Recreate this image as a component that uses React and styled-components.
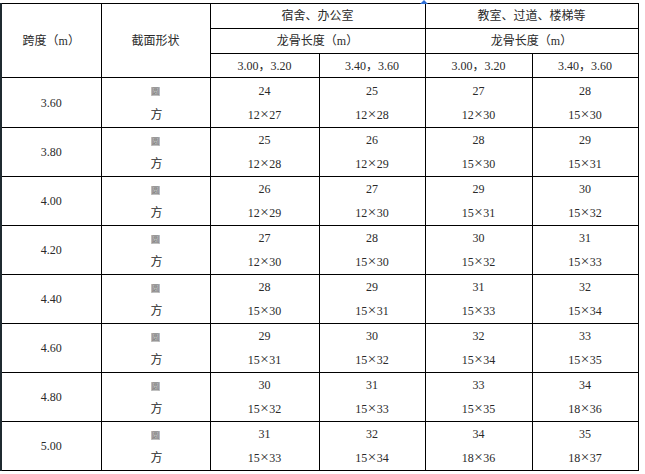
import React from "react";
import styled, { createGlobalStyle } from "styled-components";

const GlobalStyle = createGlobalStyle`
  html, body {
    margin: 0;
    padding: 0;
    background: #ffffff;
  }
`;

const rows = [
  ["3.60", ["24", "12×27"], ["25", "12×28"], ["27", "12×30"], ["28", "15×30"]],
  ["3.80", ["25", "12×28"], ["26", "12×29"], ["28", "15×30"], ["29", "15×31"]],
  ["4.00", ["26", "12×29"], ["27", "12×30"], ["29", "15×31"], ["30", "15×32"]],
  ["4.20", ["27", "12×30"], ["28", "15×30"], ["30", "15×32"], ["31", "15×33"]],
  ["4.40", ["28", "15×30"], ["29", "15×31"], ["31", "15×33"], ["32", "15×34"]],
  ["4.60", ["29", "15×31"], ["30", "15×32"], ["32", "15×34"], ["33", "15×35"]],
  ["4.80", ["30", "15×32"], ["31", "15×33"], ["33", "15×35"], ["34", "18×36"]],
  ["5.00", ["31", "15×33"], ["32", "15×34"], ["34", "18×36"], ["35", "18×37"]],
];

const colWidths = [100, 109, 109, 106, 107, 106];

// "12×27" -> 12 <Times>×</Times> 27, the sign is wider in the source
const Size = ({ text }) => {
  const [a, b] = text.split("×");
  return (
    <>
      {a}
      <Times>×</Times>
      {b}
    </>
  );
};

const App = () => {
  return (
    <>
      <GlobalStyle />
      <Page>
        <Marker viewBox="0 0 8 4" aria-hidden="true">
          <polygon points="4,0 8,4 0,4" fill="#2f6fd6" />
        </Marker>
        <Table>
          <colgroup>
            {colWidths.map((w, i) => (
              <col key={i} style={{ width: w }} />
            ))}
          </colgroup>
          <thead>
            <Row $h={25}>
              <Cell rowSpan={3}>跨度（m）</Cell>
              <Cell rowSpan={3}>截面形状</Cell>
              <Cell colSpan={2}>宿舍、办公室</Cell>
              <Cell colSpan={2}>教室、过道、楼梯等</Cell>
            </Row>
            <Row $h={25}>
              <Cell colSpan={2}>龙骨长度（m）</Cell>
              <Cell colSpan={2}>龙骨长度（m）</Cell>
            </Row>
            <Row $h={24}>
              <Cell>3.00，3.20</Cell>
              <Cell>3.40，3.60</Cell>
              <Cell>3.00，3.20</Cell>
              <Cell>3.40，3.60</Cell>
            </Row>
          </thead>
          <tbody>
            {rows.map(([span, ...vals], i) => (
              <Row key={span} $h={i === 0 ? 50 : 49}>
                <Cell>{span}</Cell>
                <Cell>
                  <Stack $first={i === 0}>
                    <Line>
                      <Shaded>圆</Shaded>
                    </Line>
                    <Line $shift={2}>方</Line>
                  </Stack>
                </Cell>
                {vals.map(([round, square], j) => (
                  <Cell key={j}>
                    <Stack $first={i === 0}>
                      <Line>{round}</Line>
                      <Line>
                        <Size text={square} />
                      </Line>
                    </Stack>
                  </Cell>
                ))}
              </Row>
            ))}
          </tbody>
        </Table>
      </Page>
    </>
  );
};

const Page = styled.div`
  position: relative;
  padding-top: 3px;
  width: 645px;
  height: 474px;
  box-sizing: border-box;
  background: #ffffff;
  overflow: hidden;
`;

const Marker = styled.svg`
  position: absolute;
  left: 420px;
  top: 0;
  width: 8px;
  height: 4px;
`;

const Table = styled.table`
  border-collapse: collapse;
  table-layout: fixed;
  width: 637px;
  border-left: 2px solid #1f2a30;
  font-family: "Liberation Serif", "Noto Sans CJK SC", serif;
  font-size: 12px;
  color: #2a2a2a;
`;

const Row = styled.tr`
  height: ${(p) => p.$h}px;
`;

const Cell = styled.td`
  border: 1px solid #000000;
  padding: 0;
  text-align: center;
  vertical-align: middle;
  line-height: 14px;
  white-space: nowrap;
`;

const Stack = styled.div`
  display: flex;
  flex-direction: column;
  justify-content: center;
  height: ${(p) => (p.$first ? 49 : 48)}px;
`;

const Line = styled.div`
  height: 24px;
  line-height: 24px;
  padding-left: ${(p) => p.$shift || 0}px;
`;

const Times = styled.span`
  font-size: 15px;
  line-height: 12px;
  margin: 0 0.5px;
`;

const Shaded = styled.span`
  display: inline-block;
  width: 9px;
  height: 9px;
  line-height: 9px;
  font-size: 8px;
  background: #c2c2c2;
  color: #7a7a7a;
  vertical-align: middle;
  overflow: hidden;
`;

export default App;
